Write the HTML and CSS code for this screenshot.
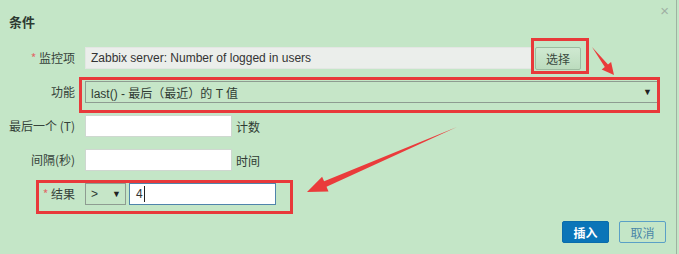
FILE: index.html
```html
<!DOCTYPE html>
<html lang="zh">
<head>
<meta charset="utf-8">
<title>条件</title>
<link rel="stylesheet" href="styles.css">
</head>
<body>
<div class="dialog">
  <div class="header">
    <h2 class="title">条件</h2>
    <span class="close">×</span>
  </div>
  <div class="form">
    <label class="lbl"><span class="req">*</span> 监控项</label>
    <div class="field">
      <div class="input ro wide">Zabbix server: Number of logged in users</div>
      <button class="btn-select">选择</button>
    </div>

    <label class="lbl">功能</label>
    <div class="field">
      <div class="select func"><span>last() - 最后（最近）的 T 值</span><span class="caret">▼</span></div>
    </div>

    <label class="lbl">最后一个 (T)</label>
    <div class="field">
      <div class="input white"></div>
      <span class="suffix">计数</span>
    </div>

    <label class="lbl">间隔(秒)</label>
    <div class="field">
      <div class="input white"></div>
      <span class="suffix">时间</span>
    </div>

    <label class="lbl"><span class="req">*</span> 结果</label>
    <div class="field">
      <div class="select op"><span>&gt;</span><span class="caret">▼</span></div>
      <div class="input white focus"><span class="val">4</span></div>
    </div>
  </div>
  <div class="footer">
    <button class="btn primary">插入</button>
    <button class="btn secondary">取消</button>
  </div>
</div>

<div class="mark mark-select"></div>
<div class="mark mark-func"></div>
<div class="mark mark-result"></div>

<svg class="arrows" width="679" height="254" viewBox="0 0 679 254">
  <polygon fill="#ea3b3b" points="592,47 604.8,67 601.7,69.5 614,75 611.1,61.9 608,64.4"/>
  <polygon fill="#ea3b3b" points="457,127 326.5,186.8 328.5,191.4 307,192 322.1,176.7 324.1,181.3"/>
</svg>
</body>
</html>
```

FILE: styles.css
```css
* { box-sizing: border-box; }
html, body { margin: 0; padding: 0; }
body {
  width: 679px;
  height: 254px;
  background: #c4e6c7;
  font-family: "Liberation Sans", "Noto Sans CJK SC", sans-serif;
  font-size: 12px;
  color: #2f3b33;
  overflow: hidden;
  position: relative;
}
.dialog {
  width: 677px;
  height: 254px;
  border-right: 1px solid #9fb3a2;
}
.header {
  height: 47px;
  display: flex;
  justify-content: space-between;
  align-items: flex-start;
  padding: 14px 9px 0 9px;
}
.title {
  margin: 0;
  font-size: 13px;
  line-height: 16px;
  font-weight: bold;
  color: #2d3a31;
  font-family: "Noto Sans CJK SC", sans-serif;
}
.close {
  font-size: 15px;
  line-height: 12px;
  color: #9fb0a4;
  margin-top: -9px;
  margin-right: -2px;
}
.form {
  display: grid;
  grid-template-columns: 75px 1fr;
  grid-auto-rows: 22px;
  column-gap: 10px;
  row-gap: 12px;
}
.lbl {
  text-align: right;
  line-height: 22px;
  font-family: "Noto Sans CJK SC", sans-serif;
  white-space: nowrap;
  color: #36423a;
}
.req { color: #e06a6a; }
.field {
  display: flex;
  align-items: center;
  height: 22px;
}
.input {
  height: 22px;
  line-height: 20px;
  padding: 0 5px;
  border: 1px solid #d8dcd8;
  font-size: 12px;
}
.ro {
  background: #ebeeeb;
  border-color: #e3e6e3;
  color: #333;
}
.wide { width: 447px; }
.white {
  width: 147px;
  background: #fff;
  border-color: #cfd8d0;
}
.focus {
  border-color: #4f84ab;
  padding-left: 6px;
}
.val {
  display: inline-block;
  line-height: 16px;
  padding-right: 1px;
  border-right: 1px solid #222;
  color: #333;
}
.btn-select {
  margin-left: 3px;
  width: 46px;
  height: 23px;
  font-family: "Noto Sans CJK SC", sans-serif;
  font-size: 12px;
  color: #3a4a40;
  background: linear-gradient(#cfe9d1, #bcdcbe);
  border: 1px solid #9cbba0;
  border-radius: 2px;
  padding: 0;
}
.select {
  height: 22px;
  display: flex;
  align-items: center;
  justify-content: space-between;
  border: 1px solid #8e9c91;
  background: #c6e6c8;
  padding: 0 5px;
  font-family: "Liberation Sans", "Noto Sans CJK SC", sans-serif;
}
.func { width: 573px; }
.op { width: 41px; margin-right: 3px; padding: 0 4px 0 5px; }
.caret { font-size: 9px; color: #222; }
.suffix {
  margin-left: 4px;
  font-family: "Noto Sans CJK SC", sans-serif;
}
.footer {
  display: flex;
  justify-content: flex-end;
  gap: 10px;
  padding-right: 10px;
  margin-top: 16px;
}
.btn {
  width: 47px;
  height: 22px;
  font-family: "Noto Sans CJK SC", sans-serif;
  font-size: 12px;
  border-radius: 2px;
  padding: 0;
}
.primary {
  background: #0a75b8;
  border: 1px solid #0a6cab;
  color: #fff;
  font-weight: bold;
}
.secondary {
  background: transparent;
  border: 1px solid #5aa0c6;
  color: #4a86a8;
}
.mark {
  position: absolute;
  border: 3px solid #e8393a;
}
.mark-select { left: 531px; top: 38px; width: 58px; height: 36px; }
.mark-func { left: 79px; top: 77px; width: 581px; height: 36px; }
.mark-result { left: 36px; top: 180px; width: 257px; height: 34px; }
.arrows {
  position: absolute;
  left: 0;
  top: 0;
  pointer-events: none;
}
```
